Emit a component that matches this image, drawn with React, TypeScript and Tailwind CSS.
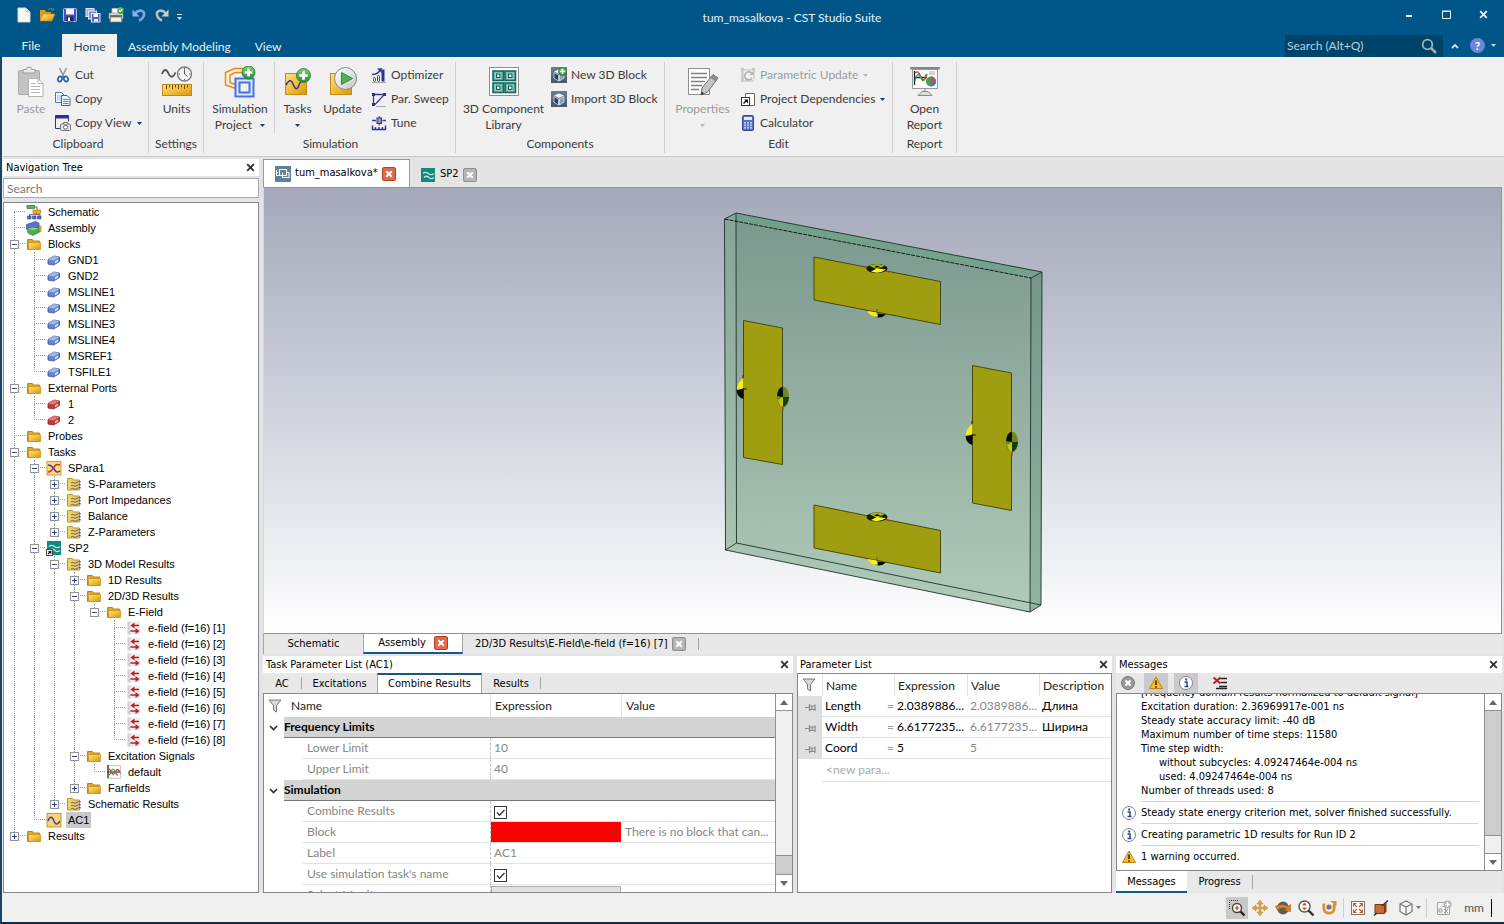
import React, { useState } from "react";
import type { ReactNode } from "react";

const segoe = "font-[Lato,'Open_Sans',sans-serif]";
const tahoma = "font-['DejaVu_Sans_Condensed','DejaVu_Sans',sans-serif]";
const micro = "font-['Liberation_Sans',Arial,sans-serif]";

type SvgProps = { size?: number; box?: string; className?: string; children: ReactNode };

function Svg({ size = 16, box, className = "", children }: SvgProps) {
  return (
    <svg
      width={size}
      height={size}
      viewBox={box ?? `0 0 ${size} ${size}`}
      fill="none"
      aria-hidden="true"
      className={`shrink-0 ${className}`}
    >
      {children}
    </svg>
  );
}

function Gradients() {
  return (
    <svg width="0" height="0" className="absolute" aria-hidden="true">
      <defs>
        <linearGradient id="gold" x1="0" y1="0" x2="1" y2="1">
          <stop offset="0" stopColor="#ffe08a" />
          <stop offset="0.5" stopColor="#f3bd3a" />
          <stop offset="1" stopColor="#d8960f" />
        </linearGradient>
        <linearGradient id="green" x1="0" y1="0" x2="0" y2="1">
          <stop offset="0" stopColor="#7ccf74" />
          <stop offset="1" stopColor="#2c8a35" />
        </linearGradient>
        <linearGradient id="steel" x1="0" y1="0" x2="0" y2="1">
          <stop offset="0" stopColor="#6b7f92" />
          <stop offset="1" stopColor="#43566a" />
        </linearGradient>
        <linearGradient id="glass" x1="0" y1="0" x2="1" y2="1">
          <stop offset="0" stopColor="#ffffff" />
          <stop offset="1" stopColor="#c4c8cc" />
        </linearGradient>
        <linearGradient id="plate" x1="0" y1="0" x2="0" y2="1">
          <stop offset="0" stopColor="#7b988e" />
          <stop offset="0.5" stopColor="#95b0a3" />
          <stop offset="1" stopColor="#b0cbb9" />
        </linearGradient>
      </defs>
    </svg>
  );
}

/* ---------- small glyphs ---------- */

const Close = ({ className = "" }: { className?: string }) => (
  <Svg size={9} className={className}>
    <path d="M1.2 1.2l6.6 6.6M7.8 1.2L1.2 7.8" stroke="currentColor" strokeWidth="1.9" />
  </Svg>
);

const Caret = ({ className = "text-[#333]" }: { className?: string }) => (
  <svg width="5" height="3" viewBox="0 0 5 3" aria-hidden="true" className={`shrink-0 ${className}`}>
    <path d="M0 0h5L2.5 3z" fill="currentColor" />
  </svg>
);

const TabClose = ({ active }: { active?: boolean }) => (
  <span
    className={`flex size-[14px] shrink-0 items-center justify-center rounded-[2px] border text-white ${
      active ? "border-[#b9401f] bg-[#e0694c]" : "border-[#8f8f8f] bg-[#b5b5b5]"
    }`}
  >
    <Svg size={8}>
      <path d="M1.2 1.2l5.6 5.6M6.8 1.2L1.2 6.8" stroke="currentColor" strokeWidth="2" />
    </Svg>
  </span>
);

const Plus = ({ cx, cy, r }: { cx: number; cy: number; r: number }) => (
  <g>
    <circle cx={cx} cy={cy} r={r} fill="url(#green)" stroke="#2a7a32" strokeWidth="0.8" />
    <path
      d={`M${cx - r * 0.6} ${cy}h${r * 1.2}M${cx} ${cy - r * 0.6}v${r * 1.2}`}
      stroke="#fff"
      strokeWidth={r * 0.38}
    />
  </g>
);

/* ---------- quick access icons ---------- */

const qat: [string, ReactNode][] = [
  ["New", <Svg key="n"><path d="M2 1h8l4 4v10H2z" fill="#fbfbf6" stroke="#cfd3d4" /><path d="M10 1v4h4" fill="#dfe3e4" stroke="#b9bfc2" strokeWidth="0.8" /></Svg>],
  ["Open", <Svg key="o"><path d="M1 14V3h5l1 2h5v3" fill="#d99a1c" /><path d="M1 14l3-7h12l-3 7z" fill="url(#gold)" stroke="#b87e12" strokeWidth="0.6" /><path d="M9 3c2-2 4-2 5 0m0 0l1-2m-1 2l-2-.4" stroke="#4f8f4a" strokeWidth="1.1" /></Svg>],
  ["Save", <Svg key="s"><rect x="1.5" y="1.5" width="13" height="13" rx="1" fill="#4a4fb0" stroke="#b9bdf0" /><rect x="4" y="2" width="8" height="5.5" fill="#f2f3ff" /><rect x="4.5" y="9.5" width="7" height="5" fill="#23276b" /><rect x="6" y="10.5" width="2" height="3.5" fill="#fff" /></Svg>],
  ["Save all", <Svg key="sa"><rect x="1" y="1.5" width="8" height="8" fill="#a5aee4" stroke="#e4e8ff" /><rect x="3.5" y="4" width="8" height="8" fill="#7f8ad4" stroke="#e4e8ff" /><rect x="6.5" y="6.5" width="8.500" height="8.500" fill="#5660bb" stroke="#dfe3ff" /><rect x="8.500" y="7" width="4.500" height="3" fill="#fff" /><rect x="9" y="12" width="4" height="2.500" fill="#e8eaff" /></Svg>],
  ["Print", <Svg key="p"><path d="M4 6V1.500h8V6" fill="#fff" stroke="#bbb" strokeWidth="0.8" /><rect x="1" y="6" width="14" height="6" rx="1" fill="#d8dadb" stroke="#8a8f92" strokeWidth="0.7" /><path d="M3 10h10l1 5H2z" fill="#f6f1d8" stroke="#777" strokeWidth="0.7" /><path d="M2 9h12" stroke="#444" strokeWidth="1.400" /><circle cx="12.500" cy="3.500" r="3.300" fill="url(#green)" /><path d="M11 3.500l1.200 1.200 2-2.400" stroke="#fff" strokeWidth="1.100" /></Svg>],
  ["Undo", <Svg key="u"><path d="M4 6.500C8 2 14 3 13 8c-.5 2.500-2.500 4.500-5 5.500" stroke="#7ea8ee" strokeWidth="2.600" /><path d="M1.500 2.500v7h7z" fill="#8cb2f4" /></Svg>],
  ["Redo", <Svg key="r"><path d="M12 6.500C8 2 2 3 3 8c.5 2.500 2.500 4.500 5 5.500" stroke="#bdbdbd" strokeWidth="2.600" /><path d="M14.500 2.500v7h-7z" fill="#cdcdcd" /></Svg>],
];

/* ---------- ribbon icons ---------- */

const Paste = () => (
  <Svg size={32}>
    <rect x="3.500" y="4.500" width="21" height="24" rx="1.500" fill="#c3c3c3" stroke="#a9a9a9" />
    <path d="M8 7V3.500h3.500a2.500 2.500 0 015 0H20V7z" fill="#e9e9e9" stroke="#9c9c9c" />
    <path d="M13.500 12.500H23l5 5v13H13.500z" fill="#fff" stroke="#b4b4b4" />
    <path d="M23 12.500v5h5M16 17.500h5M16 20.500h9M16 23.500h9M16 26.500h9" stroke="#b9b9b9" />
  </Svg>
);
const Cut = () => (
  <Svg>
    <path d="M4.500 1l4.500 9M11.500 1L7 10" stroke="#8b98a8" strokeWidth="1.600" />
    <ellipse cx="5" cy="12" rx="2" ry="2.600" stroke="#2f5ea8" strokeWidth="1.700" transform="rotate(25 5 12)" />
    <ellipse cx="11" cy="12" rx="2" ry="2.600" stroke="#2f5ea8" strokeWidth="1.700" transform="rotate(-25 11 12)" />
  </Svg>
);
const Copy = () => (
  <Svg>
    <path d="M.5 1.500h6L9 4v7.500H.5z" fill="#fff" stroke="#4b74bb" />
    <path d="M2 5h5M2 7h5M2 9h5" stroke="#8fb0e2" />
    <path d="M6.500 4.500h5.500l3 3v7H6.500z" fill="#eaf2ff" stroke="#3d65ad" />
    <path d="M8 8.500h5.500M8 10.500h5.500M8 12.500h5.500" stroke="#5f87cb" />
  </Svg>
);
const CopyView = () => (
  <Svg>
    <path d="M.5.500h13v6M.5.500v13h5" stroke="#2f3192" />
    <path d="M0 2h14" stroke="#2f3192" strokeWidth="3" />
    <rect x="5.500" y="9" width="10" height="6.500" rx="1" fill="#e1e1e1" stroke="#777" />
    <path d="M8.500 9V7.500h4V9" fill="#ddd" stroke="#777" />
    <circle cx="10.500" cy="12.200" r="2" fill="#fff" stroke="#666" />
  </Svg>
);
const Units = () => (
  <Svg size={32}>
    <path d="M1 8c2-5.500 4.500-5 6.500-.5S12 12 14.500 6.500" stroke="#555" strokeWidth="1.800" />
    <circle cx="23.500" cy="8" r="7" fill="#f4f4f4" stroke="#777" strokeWidth="1.300" />
    <path d="M23.500 3.500V8l3 2.500M23.500 1.800v1.500M29.500 8H28M23.500 14v-1M17.500 8H19" stroke="#555" />
    <rect x="1.500" y="18.500" width="29" height="11" fill="url(#gold)" stroke="#c1881b" />
    <path d="M5.500 19v4M8.500 19v2.500M11.500 19v4M14.500 19v2.500M17.500 19v4M20.500 19v2.500M23.500 19v4M26.500 19v2.500" stroke="#6b4a08" />
  </Svg>
);
const SimProject = () => (
  <Svg size={32}>
    <path d="M22 2.500H10.500L1.500 6.500v12.500l10 3.500v-4l-5.500-2V9l5.500-2.500H22z" stroke="#e08a1c" strokeWidth="1.500" fill="#fff0d8" />
    <rect x="11.500" y="12.500" width="18" height="18" fill="#dbe7ff" stroke="#4474e0" strokeWidth="2" />
    <rect x="15.500" y="16.500" width="10" height="10" fill="#f0f0f0" stroke="#4474e0" strokeWidth="2" />
    <Plus cx={24.500} cy={6.500} r={6.500} />
  </Svg>
);
const Tasks = () => (
  <Svg size={32}>
    <rect x="3.500" y="7.500" width="21" height="21" fill="url(#gold)" stroke="#c38b1a" />
    <path d="M4 19c3-5 5-6 7-1s4 7 6 1c1.500-4 3-5 7-5" stroke="#3b3390" strokeWidth="1.500" />
    <Plus cx={21.500} cy={9.500} r={7} />
  </Svg>
);
const Update = () => (
  <Svg size={32}>
    <rect x="3.500" y="7.500" width="21" height="21" fill="url(#gold)" stroke="#c38b1a" />
    <circle cx="18.500" cy="12.500" r="11" fill="url(#glass)" stroke="#858585" />
    <path d="M14.500 6.500l11 6-11 6z" fill="#4bb352" stroke="#2b8d35" />
  </Svg>
);
const Optimizer = () => (
  <Svg>
    <path d="M1 7.500c4 0 6-1 8-4" stroke="#3c3f94" strokeWidth="1.400" />
    <path d="M6 1.500L11 1l-.5 5z" fill="#3c3f94" />
    <rect x="2.500" y="10.500" width="2" height="4" rx="1" stroke="#3c3f94" />
    <rect x="6.500" y="8.500" width="2" height="6" rx="1" stroke="#3c3f94" />
    <path d="M12 2.500v12" stroke="#2e3192" strokeWidth="3" />
    <path d="M1 15.500h14" stroke="#aaa" />
  </Svg>
);
const Sweep = () => (
  <Svg>
    <path d="M2.500 15V3.500h11L4 13.500" stroke="#3a3c90" strokeWidth="1.300" />
    <path d="M1 2h3v3H1zM12 2h3v3h-3zM1 12h3v3H1z" fill="#2e3192" />
    <path d="M5 15.500h10" stroke="#aaa" />
  </Svg>
);
const Tune = () => (
  <Svg>
    <path d="M1 5.500h4M11.500 5.500H15" stroke="#3a3c90" strokeWidth="1.400" />
    <rect x="6" y="3" width="4.500" height="5.500" fill="#8e91d0" stroke="#2e3192" />
    <path d="M8.200 1v2M8.200 8.500v2" stroke="#2e3192" />
    <path d="M1.500 10.500v4h13v-4M4.500 12v2M8 12v2M11.500 12v2" stroke="#2e3192" strokeWidth="1.400" />
  </Svg>
);
const Library = () => (
  <Svg size={32}>
    <rect x="1.500" y="1.500" width="29" height="28" fill="#fff" stroke="#8e8e8e" />
    {[[5, 5], [17, 5], [5, 17], [17, 17]].map(([x, y]) => (
      <g key={`${x}-${y}`}>
        <rect x={x} y={y} width="10.500" height="9.500" fill="#74bdb2" stroke="#12685d" strokeWidth="1.600" />
        <rect x={x + 2.500} y={y + 2} width="5.500" height="5.500" fill="#eefaf8" />
        <rect x={x + 3.500} y={y + 3} width="3.500" height="3.500" fill="#fff" stroke="#0b5d52" strokeWidth="1.200" />
      </g>
    ))}
  </Svg>
);
const Block3d = ({ plus }: { plus?: boolean }) => (
  <Svg>
    <rect width="16" height="16" fill="url(#steel)" />
    <path d="M3 4.500l5-2 5 2-5 2.500z" fill="#f1f5f8" />
    <path d="M3 5.500L7.500 8v6L3 11z" fill="#2c3e50" stroke="#dbe3ea" strokeWidth="0.800" />
    <path d="M13 5.500L8.500 8v6l4.500-3z" fill="#8ba0b4" stroke="#dbe3ea" strokeWidth="0.800" />
    {plus && <Plus cx={11.500} cy={4.500} r={4} />}
  </Svg>
);
const Properties = () => (
  <Svg size={32}>
    <rect x="1.500" y="2.500" width="21" height="26" fill="#fff" stroke="#8f8f8f" />
    <path d="M4 7.500h16M4 11.500h16M4 15.500h14M4 19.500h11M4 23.500h8" stroke="#808080" strokeWidth="1.300" />
    <path d="M26 8.500l5 3.500-10.500 14-6.500 3 1-7z" fill="#c6c6c6" stroke="#6e6e6e" />
    <path d="M26 8.500l5 3.500-2.500 3.500-5-3.500z" fill="#8b8b8b" />
    <path d="M14 29l.6-3.500 2.600 2z" fill="#333" />
  </Svg>
);
const ParamUpdate = () => (
  <Svg>
    <path d="M3 2v12h11M2 14V3h12v9" stroke="#bdbdbd" />
    <path d="M1 1h3v3H1zM12 1h3v3h-3zM1 12h3v3H1z" fill="#c9c9c9" />
    <path d="M11.500 6a4 4 0 10.500 5" stroke="#b1b1b1" strokeWidth="1.600" />
    <path d="M13.500 4v4h-4z" fill="#b1b1b1" />
  </Svg>
);
const Dependencies = () => (
  <Svg>
    <path d="M5.500 6V2.500h9v12H9" fill="#fff" stroke="#666" />
    <rect x="1.500" y="6.500" width="8" height="8" fill="#fff" stroke="#333" />
    <path d="M3.500 12.500l3-3" stroke="#111" strokeWidth="1.500" />
    <path d="M4 8.500h4v4z" fill="#111" />
  </Svg>
);
const Calculator = () => (
  <Svg>
    <rect x="2.500" y=".5" width="11" height="15" rx="1" fill="#5a6fc0" stroke="#33479b" />
    <rect x="4" y="2" width="8" height="3" fill="#e3e9ff" />
    {[7, 9.500, 12].map((y) => [4, 7, 10].map((x) => <rect key={`${x}-${y}`} x={x} y={y} width="2" height="1.600" fill="#bcc7f2" />))}
  </Svg>
);
const Report = () => (
  <Svg size={32}>
    <rect x="1" y="1" width="30" height="2.500" rx="1" fill="#858585" />
    <rect x="3.500" y="3.500" width="25" height="19" fill="#fff" stroke="#999" />
    <path d="M5.500 5v14M5 11.500h13" stroke="#222" strokeWidth="1.300" />
    <path d="M6 7c3-3 4 0 6 4s4 4 6-3" stroke="#cf3340" strokeWidth="1.300" />
    <path d="M6 15c2-8 4-8 6-3s4 3 5-4" stroke="#3ca24a" strokeWidth="1.300" />
    <path d="M20 6h6M20 8h6" stroke="#aaa" />
    <circle cx="22" cy="15.500" r="5" fill="#4f9a58" />
    <path d="M22 15.500v-5a5 5 0 015 5z" fill="#d3464f" />
    <path d="M22 15.500h5a5 5 0 01-5 5z" fill="#5671c4" />
    <path d="M16 23v3M9 29.500h14l-4-4h-6z" stroke="#888" fill="#ddd" />
  </Svg>
);

/* ---------- tree icons ---------- */

const Folder = () => (
  <Svg>
    <path d="M1.500 3.500h5l1 1.500h6v8.500h-12z" fill="#dfa62c" stroke="#b8860f" />
    <path d="M2.500 6.500h12v7h-12z" fill="url(#gold)" stroke="#c9972a" strokeWidth="0.800" />
  </Svg>
);
const ResultFolder = () => (
  <Svg>
    <path d="M1.500 2.500h5l1 1.500h6v10h-12z" fill="#efcf62" stroke="#b8962f" />
    <path d="M5 7c2-2 3 1 5 0s3-2 5-1M5 10c2-2 3 1 5 0s3-2 5-1M5 13c2-2 3 1 5 0s3-2 5-1" stroke="#45478f" strokeWidth="0.900" />
  </Svg>
);
const TreeBlock = ({ red }: { red?: boolean }) => (
  <Svg>
    <path d="M2 7.500L8 4l5.500 1v4.500l-6 3.500L2 12z" fill={red ? "#c23a3a" : "#6b83cf"} stroke={red ? "#8f1f1f" : "#38509c"} strokeWidth="0.800" />
    <path d="M2 7.500L8 4l5.500 1-6 3.500z" fill={red ? "#e07a7a" : "#a4b6ea"} />
    <path d="M9 9.200l3-1.800v2l-3 1.800z" fill={red ? "#f4c8c8" : "#dfe6ff"} />
  </Svg>
);
const Schematic = () => (
  <Svg>
    <rect x="1" y="1.500" width="7.500" height="3" fill="#58b05a" stroke="#2d7d35" strokeWidth="0.700" />
    <rect x="7" y="6" width="7.500" height="3.500" fill="#f0a93a" stroke="#b87512" strokeWidth="0.700" />
    <path d="M8 3h3v3M10.500 9.500V11M3.500 12.500v-1.800h10.500v2" stroke="#555" strokeWidth="0.900" />
    <path d="M1.500 12h3.500v3H1.500zM6.500 12H10v3H6.500zM11.500 12H15v3h-3.500z" fill="#4f6cd0" stroke="#2e469d" strokeWidth="0.600" />
  </Svg>
);
const Assembly = () => (
  <Svg>
    <path d="M11 4.500l4.500 1.500v5.500L11 14z" fill="#e79a35" />
    <path d="M.5 4.500l9-3 3.500 1.500v4L5 10.500.5 9z" fill="#5875cc" stroke="#3a529f" strokeWidth="0.700" />
    <path d="M1 8.500l6-1 6 1v3.500L7 15.500l-5-2.500z" fill="#4fae56" stroke="#287f33" strokeWidth="0.700" />
    <path d="M1.500 8.500L7 10l6-1.500L7 7.500z" fill="#8bd48c" />
  </Svg>
);
const SPara = () => (
  <Svg>
    <rect x="1" y="1.500" width="14" height="13.500" fill="#fbd98a" stroke="#df9320" />
    <path d="M2 5c3 0 4 1 6 4s3 4 6 2" stroke="#4a3fa0" strokeWidth="1.600" />
    <path d="M2 12c3 0 4-2 6-5s3-3 6-2" stroke="#cc2d2d" strokeWidth="1.600" />
  </Svg>
);
const WaveTile = ({ link }: { link?: boolean }) => (
  <Svg>
    <rect x="1" y="1" width="14" height="14" fill="#108a7c" />
    <path d="M3 6.500c2-2 3.500-1.500 5.500 0s3.500 1.500 5.500 0M4 10.500c2-2 3.500-1.500 5 0s3 1.500 5 0" stroke="#bfe6e0" strokeWidth="1.200" />
    {link && (
      <g>
        <rect x=".5" y="9.500" width="6" height="6" fill="#fff" stroke="#444" />
        <path d="M2 14l2.500-2.500M2.500 11.500h2.300v2.300" stroke="#111" strokeWidth="1.100" />
      </g>
    )}
  </Svg>
);
const AcTask = () => (
  <Svg>
    <rect x="1" y="1.500" width="14" height="13.500" fill="#f9d27c" stroke="#d0951e" />
    <path d="M2 9c2-5 4-5 6 0s4 3 6 0" stroke="#4b3f9a" strokeWidth="1.500" />
  </Svg>
);
const Field = () => (
  <Svg>
    <path d="M1.500 1.500h12.500v13H1.500z" fill="#ececec" />
    <path d="M1.500 1.500h3v13h-3z" fill="#d3d3d3" />
    <path d="M13 5.500H7M4.500 11h6" stroke="#b5202a" strokeWidth="1.600" />
    <path d="M4.500 5.500l4-3v6zM13.500 11l-4-3v6z" fill="#b5202a" />
  </Svg>
);
const Signal = () => (
  <Svg>
    <rect x="1.500" y="1.500" width="13" height="13" fill="#f6fbf4" stroke="#c9c9c9" />
    <path d="M2 1v13M2 8h12" stroke="#222" strokeWidth="1.200" />
    <path d="M2.500 5c2-1 3 6 5 5s3-6 5-4 1.500 3 2 3" stroke="#cb2e3a" strokeWidth="1.200" />
    <path d="M3 11c2 0 2-6 4-6s3 7 5 6" stroke="#3ba24b" strokeWidth="1.200" />
  </Svg>
);

/* ---------- navigation tree ---------- */

type Node = { label: string; icon: ReactNode; kids?: Node[]; closed?: boolean; selected?: boolean };
const leaf = (label: string, icon: ReactNode): Node => ({ label, icon });

const tree: Node[] = [
  leaf("Schematic", <Schematic />),
  leaf("Assembly", <Assembly />),
  {
    label: "Blocks",
    icon: <Folder />,
    kids: ["GND1", "GND2", "MSLINE1", "MSLINE2", "MSLINE3", "MSLINE4", "MSREF1", "TSFILE1"].map((n) => leaf(n, <TreeBlock />)),
  },
  { label: "External Ports", icon: <Folder />, kids: ["1", "2"].map((n) => leaf(n, <TreeBlock red />)) },
  leaf("Probes", <Folder />),
  {
    label: "Tasks",
    icon: <Folder />,
    kids: [
      {
        label: "SPara1",
        icon: <SPara />,
        kids: ["S-Parameters", "Port Impedances", "Balance", "Z-Parameters"].map((label) => ({ label, icon: <ResultFolder />, closed: true })),
      },
      {
        label: "SP2",
        icon: <WaveTile link />,
        kids: [
          {
            label: "3D Model Results",
            icon: <ResultFolder />,
            kids: [
              { label: "1D Results", icon: <Folder />, closed: true },
              {
                label: "2D/3D Results",
                icon: <Folder />,
                kids: [
                  {
                    label: "E-Field",
                    icon: <Folder />,
                    kids: [1, 2, 3, 4, 5, 6, 7, 8].map((n) => leaf(`e-field (f=16) [${n}]`, <Field />)),
                  },
                ],
              },
              { label: "Excitation Signals", icon: <Folder />, kids: [leaf("default", <Signal />)] },
              { label: "Farfields", icon: <Folder />, closed: true },
            ],
          },
          { label: "Schematic Results", icon: <ResultFolder />, closed: true },
        ],
      },
      { label: "AC1", icon: <AcTask />, selected: true },
    ],
  },
  { label: "Results", icon: <Folder />, closed: true },
];

const dots = "border-dotted border-[#9a9a9a]";

function Expander({ closed }: { closed?: boolean }) {
  return (
    <span className="absolute left-[5px] top-1 flex size-[9px] items-center justify-center border border-[#919191] bg-white">
      <Svg size={5}>
        <path d={closed ? "M0 2.500h5M2.500 0v5" : "M0 2.500h5"} stroke="#2c3f8f" />
      </Svg>
    </span>
  );
}

function TreeRows({ nodes, lines }: { nodes: Node[]; lines: boolean[] }) {
  return (
    <ul>
      {nodes.map((node, i) => {
        const last = i === nodes.length - 1;
        const first = lines.length === 0 && i === 0;
        return (
          <li key={node.label}>
            <div className="flex h-4 items-center whitespace-nowrap">
              {lines.map((on, k) => (
                <span key={k} className="flex h-4 w-5 shrink-0 pl-[9px]">
                  {on && <span className={`border-l ${dots}`} />}
                </span>
              ))}
              <span className="relative flex h-4 w-5 shrink-0 flex-col pl-[9px]">
                <span className={`h-2 border-b ${first ? "" : "border-l"} ${dots}`} />
                <span className={`h-2 ${last ? "" : "border-l"} ${dots}`} />
                {(node.kids || node.closed) && <Expander closed={node.closed} />}
              </span>
              <span className="mr-[3px] flex w-5 shrink-0 pl-px">{node.icon}</span>
              <span className={node.selected ? "-ml-0.5 bg-[#c8c8c8] px-0.5" : ""}>{node.label}</span>
            </div>
            {node.kids && <TreeRows nodes={node.kids} lines={[...lines, !last]} />}
          </li>
        );
      })}
    </ul>
  );
}

function PanelTitle({ children }: { children: ReactNode }) {
  return (
    <header className="flex h-[17px] shrink-0 items-center justify-between bg-white pl-[3px] pr-1 text-black">
      <h2>{children}</h2>
      <button type="button" aria-label="Close panel" className="text-[#333]">
        <Close />
      </button>
    </header>
  );
}

function NavPanel() {
  return (
    <aside className={`flex w-[256px] shrink-0 flex-col text-[11px] leading-4 ${tahoma}`}>
      <PanelTitle>Navigation Tree</PanelTitle>
      <input
        type="search"
        aria-label="Search"
        placeholder="Search"
        className={`mt-0.5 h-5 border border-[#ababab] bg-white px-[3px] text-xs placeholder:text-[#777] ${segoe}`}
      />
      <nav className={`mt-1 min-h-0 flex-1 overflow-hidden border border-[#828790] bg-white pl-px pt-px text-black ${micro}`}>
        <TreeRows nodes={tree} lines={[]} />
      </nav>
    </aside>
  );
}

/* ---------- ribbon ---------- */

function Group({ title, width, children }: { title: string; width: string; children: ReactNode }) {
  return (
    <section className={`flex shrink-0 flex-col border-r border-[#d0d0d0] ${width}`}>
      <div className="flex h-[74px] items-start">{children}</div>
      <h3 className="text-center leading-4">{title}</h3>
    </section>
  );
}

type BigProps = { icon: ReactNode; label: string; second?: string; caret?: boolean; disabled?: boolean; width: string };

function Big({ icon, label, second, caret, disabled, width }: BigProps) {
  return (
    <button type="button" disabled={disabled} className={`flex shrink-0 flex-col items-center pt-1 leading-4 disabled:text-[#9b9b9b] ${width}`}>
      {icon}
      <span className="mt-[3px] whitespace-nowrap">{label}</span>
      <span className="flex h-4 items-center gap-2 whitespace-nowrap">
        {second}
        {caret && <Caret className={disabled ? "text-[#b5b5b5]" : "text-[#1f3a5a]"} />}
      </span>
    </button>
  );
}

function Small({ icon, label, caret, disabled }: { icon: ReactNode; label: string; caret?: boolean; disabled?: boolean }) {
  return (
    <button type="button" disabled={disabled} className="flex h-6 items-center whitespace-nowrap disabled:text-[#9b9b9b]">
      {icon}
      <span className="ml-1">{label}</span>
      {caret && <Caret className={disabled ? "ml-[5px] text-[#b5b5b5]" : "ml-[5px] text-[#1f3a5a]"} />}
    </button>
  );
}

function Ribbon() {
  return (
    <div className={`flex h-[100px] shrink-0 overflow-hidden border-b border-[#c9c9c9] bg-[#f0f0f0] pb-[3px] pt-[5px] text-xs text-[#3b3b3b] ${segoe}`}>
      <Group title="Clipboard" width="w-[146px] pl-[5px]">
        <Big icon={<Paste />} label="Paste" disabled width="w-[46px]" />
        <div className="ml-px flex flex-col pt-px">
          <Small icon={<Cut />} label="Cut" />
          <Small icon={<Copy />} label="Copy" />
          <Small icon={<CopyView />} label="Copy View" caret />
        </div>
      </Group>
      <Group title="Settings" width="w-[55px]">
        <Big icon={<Units />} label="Units" width="w-[55px]" />
      </Group>
      <Group title="Simulation" width="w-[252px] pl-0.5">
        <Big icon={<SimProject />} label="Simulation" second="Project" caret width="w-[69px] border-r border-[#d0d0d0]" />
        <Big icon={<Tasks />} label="Tasks" caret width="w-[45px]" />
        <Big icon={<Update />} label="Update" width="w-[45px]" />
        <div className="ml-1.5 flex flex-col pt-px">
          <Small icon={<Optimizer />} label="Optimizer" />
          <Small icon={<Sweep />} label="Par. Sweep" />
          <Small icon={<Tune />} label="Tune" />
        </div>
      </Group>
      <Group title="Components" width="w-[209px]">
        <Big icon={<Library />} label="3D Component" second="Library" width="w-[95px]" />
        <div className="flex flex-col pt-px">
          <Small icon={<Block3d plus />} label="New 3D Block" />
          <Small icon={<Block3d />} label="Import 3D Block" />
        </div>
      </Group>
      <Group title="Edit" width="w-[228px]">
        <Big icon={<Properties />} label="Properties" caret disabled width="w-[75px]" />
        <div className="flex flex-col pt-px">
          <Small icon={<ParamUpdate />} label="Parametric Update" caret disabled />
          <Small icon={<Dependencies />} label="Project Dependencies" caret />
          <Small icon={<Calculator />} label="Calculator" />
        </div>
      </Group>
      <Group title="Report" width="w-[64px]">
        <Big icon={<Report />} label="Open" second="Report" width="w-[63px]" />
      </Group>
    </div>
  );
}

function TitleBar() {
  return (
    <header className={`shrink-0 bg-[#005689] text-xs text-[#e8f0f5] ${segoe}`}>
      <div className="grid h-[34px] grid-cols-[1fr_auto_1fr] items-center pr-3">
        <div className="flex items-center gap-[7px] pb-1 pl-4">
          {qat.map(([name, icon]) => (
            <button key={name} type="button" aria-label={name}>
              {icon}
            </button>
          ))}
          <button type="button" aria-label="Customize toolbar" className="mt-1 flex flex-col items-center gap-0.5">
            <span className="h-px w-[5px] bg-[#cfe0ea]" />
            <Caret className="text-[#cfe0ea]" />
          </button>
        </div>
        <h1 className="pl-[92px] pt-0.5">tum_masalkova - CST Studio Suite</h1>
        <div className="flex items-center justify-end gap-7 pb-1.5 pr-1">
          <button type="button" aria-label="Minimize" className="pt-1.5">
            <Svg size={9}><path d="M1 3h6" stroke="#e8f0f5" strokeWidth="2" /></Svg>
          </button>
          <button type="button" aria-label="Maximize">
            <Svg size={9}><path d="M.5 1.500h8v7h-8zM0 1h9" stroke="#e8f0f5" /></Svg>
          </button>
          <button type="button" aria-label="Close window">
            <Close />
          </button>
        </div>
      </div>
      <div className="flex h-[23px] items-center justify-between">
        <div className="flex self-stretch leading-6">
          <button type="button" className="w-[62px] pb-0.5">File</button>
          <button type="button" className="w-[55px] bg-[#f0f0f0] pt-px text-[#1e4a6d]">Home</button>
          <button type="button" className="pl-[11px] pr-3 pt-px">Assembly Modeling</button>
          <button type="button" className="px-3 pt-px">View</button>
        </div>
        <div className="flex items-center self-stretch">
          <label className="flex h-[22px] w-[158px] items-center self-end bg-[#004369] px-0.5">
            <input aria-label="Search (Alt+Q)" placeholder="Search (Alt+Q)" className="min-w-0 flex-1 bg-transparent placeholder:text-[#b9cfdd]" />
            <Svg className="mr-1">
              <circle cx="6.500" cy="6.500" r="4.800" stroke="#9fb0bb" strokeWidth="1.800" />
              <path d="M10 10l5 5" stroke="#9fb0bb" strokeWidth="2.500" />
            </Svg>
          </label>
          <button type="button" aria-label="Collapse ribbon" className="ml-2">
            <Svg size={8}><path d="M1 6l3-3 3 3" stroke="#d3e2ec" strokeWidth="1.800" /></Svg>
          </button>
          <button type="button" aria-label="Help" className="ml-[11px] flex size-[15px] items-center justify-center rounded-full bg-[#6b87d8] text-xs font-bold leading-none text-white">
            ?
          </button>
          <span className="ml-[6px] mr-2"><Caret className="text-[#c5d8e5]" /></span>
        </div>
      </div>
    </header>
  );
}

/* ---------- 3D viewport ---------- */

const patches = [
  "104,56 230.500,80.500 230.500,123.500 104,99",
  "33.500,119.500 72.500,127 72.500,263.500 33.500,256.500",
  "262.500,164.500 301.500,172 301.500,309.500 262.500,302",
  "104,304 230.500,329.500 230.500,372 104,347",
];

const TopPort = ({ x, y }: { x: number; y: number }) => (
  <g>
    <ellipse cx={x} cy={y} rx="10.500" ry="4.500" fill="#161a08" />
    <path d={`M${x - 8} ${y - 3}q8-3 16 0l-8 4z`} fill="#a8b400" />
    <path d={`M${x - 6} ${y + 3}l6-3 9 1q-7 5-15 2z`} fill="#ffff1e" />
    <path d={`M${x - 3} ${y - 1}l3-2 4 2z`} fill="#101505" />
    <path d={`M${x + 9} ${y + 2}l3 2`} stroke="#d03020" />
  </g>
);
const BottomPort = ({ x, y }: { x: number; y: number }) => (
  <g>
    <path d={`M${x - 3} ${y}l12 1.500q-4 4-10 2.500z`} fill="#080a04" />
    <path d={`M${x - 10} ${y - 2}l10 1.500 1 4q-7 1-11-5.500z`} fill="#f6ee18" />
    <path d={`M${x} ${y}v-4M${x - 12} ${y - 3}l3 1`} stroke="#7a4a18" />
  </g>
);
const LeftPort = ({ x, y }: { x: number; y: number }) => (
  <g>
    <path d={`M${x} ${y - 11}q-7 5-6.500 12l6.500-2z`} fill="#f6ee18" />
    <path d={`M${x - 7} ${y + 1}l7-1v10q-6-1-7-9z`} fill="#080a04" />
    <path d={`M${x - 6} ${y + 2}l6-2h3`} stroke="#080a04" />
    <path d={`M${x - 1} ${y - 14}v3`} stroke="#d03020" />
  </g>
);
const RightPort = ({ x, y }: { x: number; y: number }) => (
  <g>
    <ellipse cx={x} cy={y} rx="6" ry="10.500" fill="#6f8a1a" />
    <path d={`M${x} ${y}l-6-1q1-9 6-9z`} fill="#0a0d05" />
    <path d={`M${x} ${y}l6 0q-1 8-6 10z`} fill="#123c14" />
    <path d={`M${x} ${y}l-5 3q2 7 5 7z`} fill="#c3c70c" />
    <path d={`M${x} ${y + 10}v4`} stroke="#d03020" />
  </g>
);

function Viewport() {
  return (
    <main className="flex min-h-0 flex-1 items-center justify-center overflow-hidden border border-[#8f939c] border-l-[#d7d7d7] bg-linear-to-b from-[#a4a8b9] via-[#d0d3dd] to-white">
      <svg viewBox="0 0 346 420" fill="none" className="h-[420px] w-[346px]" role="img" aria-label="Antenna assembly">
        <path d="M14.500 18L26 12 332 71 331 404 320 411 15.500 349z" fill="url(#plate)" />
        <path d="M14.500 18L26 12 332 71 321 77z" fill="#6da587" fillOpacity="0.600" />
        <path d="M321 77L332 71 331 404 320 411z" fill="#5f8775" fillOpacity="0.350" />
        <path d="M14.500 18L26 12 26.500 342 15.500 349z" fill="#a9c9b8" fillOpacity="0.250" />
        <g stroke="#1c3327" strokeWidth="0.900">
          <path d="M14.500 18L26 12 332 71 331 404 320 411 15.500 349z" />
          <path d="M26 12L26.500 342 15.500 349M26.500 342L331 404M321 77L332 71M321 77L320 411" />
        </g>
        <path d="M14.500 18L321 77" stroke="#101c15" strokeDasharray="4 1" />
        {patches.map((p) => (
          <polygon key={p} points={p} fill="#9e9e10" stroke="#3c3f08" strokeWidth="0.900" />
        ))}
        <TopPort x={167} y={67.500} />
        <BottomPort x={167} y={112} />
        <TopPort x={167} y={316} />
        <BottomPort x={167} y={360} />
        <LeftPort x={33.500} y={188} />
        <RightPort x={73} y={196} />
        <LeftPort x={262.500} y={234} />
        <RightPort x={302} y={241} />
      </svg>
    </main>
  );
}

function DocTabs() {
  return (
    <div className={`flex h-[28px] shrink-0 items-end text-[11px] text-black ${tahoma}`}>
      <button type="button" className="flex h-[28px] w-[147px] items-center gap-1 whitespace-nowrap border border-b-0 border-[#9a9a9a] bg-white pl-[11px]">
        <Svg>
          <rect width="16" height="16" fill="#5f8197" />
          <path d="M4.500 3.500h7v6h-7zM1.500 4v5.500h3M11.500 6.500H14v5H7.500v-5M1 6.500h2" stroke="#fff" strokeWidth="1.100" />
        </Svg>
        tum_masalkova*
        <TabClose active />
      </button>
      <button type="button" className="flex h-[25px] items-center gap-1 pl-[10px]">
        <WaveTile />
        SP2
        <TabClose />
      </button>
    </div>
  );
}

function ViewTabs() {
  return (
    <div className={`flex h-[20px] shrink-0 items-stretch whitespace-nowrap bg-[#e8e8e8] text-[11px] text-black ${tahoma}`}>
      <button type="button" className="w-[100px] border-l border-[#a5a5a5] text-center">Schematic</button>
      <button type="button" className="flex w-[100px] items-center justify-center gap-2 border-x border-b-2 border-x-[#a5a5a5] border-b-[#1b5680] bg-white">
        Assembly
        <TabClose active />
      </button>
      <button type="button" className="flex items-center gap-1 pl-3">
        2D/3D Results\E-Field\e-field (f=16) [7]
        <TabClose />
      </button>
      <span className="my-1 ml-3 border-l border-[#a5a5a5]" />
    </div>
  );
}

/* ---------- bottom panels ---------- */

function Arrow({ down, edge }: { down?: boolean; edge: string }) {
  return (
    <span className={`flex h-[17px] shrink-0 items-center justify-center bg-white ${edge}`}>
      <svg width="8" height="5" viewBox="0 0 8 5" aria-hidden="true">
        <path d={down ? "M0 0h8L4 5z" : "M0 5h8L4 0z"} fill="#666" />
      </svg>
    </span>
  );
}

const Funnel = () => (
  <Svg size={14}>
    <path d="M1 1h12L8.500 6.500V13L5.500 11V6.500z" fill="#d8d8d8" stroke="#777" />
  </Svg>
);

const Chevron = ({ color = "#333" }: { color?: string }) => (
  <Svg size={9}>
    <path d="M1 3l3.500 3.500L8 3" stroke={color} strokeWidth="1.700" />
  </Svg>
);

function Tick({ label }: { label: string }) {
  const [on, setOn] = useState(true);
  return (
    <label className="relative ml-[3px] mt-0.5 flex size-[13px]">
      <input type="checkbox" aria-label={label} checked={on} onChange={(e) => setOn(e.target.checked)} className="size-[13px] appearance-none border border-[#333] bg-white" />
      {on && (
        <Svg size={13} className="pointer-events-none absolute inset-0">
          <path d="M3 6.500l2.500 2.700L10.500 4" stroke="#333" strokeWidth="1.300" />
        </Svg>
      )}
    </label>
  );
}

function SectionRow({ title }: { title: string }) {
  return (
    <tr className="h-[21px]">
      <td className="text-center align-middle"><button type="button" aria-label={`Collapse ${title}`} className="flex pl-[5px]"><Chevron /></button></td>
      <th colSpan={3} className="border-b border-[#777] bg-[#d3d3d3] text-left font-bold text-black">{title}</th>
    </tr>
  );
}

function Row({ name, children, value }: { name: string; children?: ReactNode; value?: string }) {
  return (
    <tr className="h-[21px] text-[#868686]">
      <td />
      <td className="pl-[19px]"><div className="h-[21px] truncate border-b border-[#e2e2e2] pl-1 leading-5">{name}</div></td>
      <td className="border-b border-l border-dashed border-b-[#e2e2e2] border-l-[#c4c4c4] [border-bottom-style:solid]">{children}</td>
      <td className="truncate border-b border-[#e2e2e2] pl-1">{value}</td>
    </tr>
  );
}

function TaskPanel() {
  return (
    <section className={`flex min-h-0 min-w-0 flex-col text-[11px] leading-4 ${tahoma}`}>
      <PanelTitle>Task Parameter List (AC1)</PanelTitle>
      <div className="flex h-[20px] shrink-0 items-stretch bg-[#e8e8e8] text-black">
        <button type="button" className="w-[38px] pt-0.5 text-center">AC</button>
        <span className="my-1 border-l border-[#a5a5a5]" />
        <button type="button" className="w-[75px] pt-0.5 text-center">Excitations</button>
        <button type="button" className="w-[105px] border-x border-t-2 border-x-[#a5a5a5] border-t-[#1b5680] bg-white text-center">Combine Results</button>
        <button type="button" className="w-[58px] pt-0.5 text-center">Results</button>
        <span className="my-1 border-l border-[#a5a5a5]" />
      </div>
      <div className={`flex min-h-0 flex-1 border border-[#828790] bg-white text-xs ${segoe}`}>
        <div className="min-w-0 flex-1 overflow-hidden">
          <table className="w-full table-fixed border-separate border-spacing-0">
            <colgroup>
              <col className="w-[20px]" />
              <col className="w-[206px]" />
              <col className="w-[131px]" />
              <col />
            </colgroup>
            <thead>
              <tr className="h-[23px] text-left text-[#222]">
                <th className="pl-1 font-normal"><Funnel /></th>
                <th className="pl-[7px] pt-px font-normal">Name</th>
                <th className="border-l border-[#e2e2e2] pl-1 pt-px font-normal">Expression</th>
                <th className="border-l border-[#e2e2e2] pl-1 pt-px font-normal">Value</th>
              </tr>
            </thead>
            <tbody>
              <SectionRow title="Frequency Limits" />
              <Row name="Lower Limit"><span className="pl-[3px]">10</span></Row>
              <Row name="Upper Limit"><span className="pl-[3px]">40</span></Row>
              <SectionRow title="Simulation" />
              <Row name="Combine Results"><Tick label="Combine Results" /></Row>
              <Row name="Block" value="There is no block that can...">
                <div className="flex h-5 items-center bg-[#ff0000] pr-[3px]">
                  <select aria-label="Block" className="h-5 min-w-0 flex-1 appearance-none bg-[#ff0000]"><option value="" /></select>
                  <Chevron color="#b32020" />
                </div>
              </Row>
              <Row name="Label"><span className="pl-[3px]">AC1</span></Row>
              <Row name="Use simulation task's name"><Tick label="Use simulation task's name" /></Row>
              <Row name="Select Monitors"><button type="button" aria-label="Select Monitors" className="mt-px block h-[19px] w-full border border-[#adadad] bg-[#e1e1e1]" /></Row>
            </tbody>
          </table>
        </div>
        <div className="flex w-[17px] shrink-0 flex-col border-l border-[#8f8f8f] bg-[#f0f0f0]">
          <Arrow edge="border-b border-[#8f8f8f]" />
          <span className="flex-1" />
          <span className="h-5 border-y border-[#8f8f8f] bg-[#cdcdcd]" />
          <Arrow down edge="" />
        </div>
      </div>
    </section>
  );
}

const Pin = () => (
  <Svg size={12}>
    <path d="M0 6.500h4.500M4.500 3v7M4.500 5h5M4.500 8.500h5M10 3.500v6.500M7 5v3" stroke="#8a8a8a" strokeWidth="1.200" />
  </Svg>
);

const params = [
  ["Length", "2.0389886...", "2.0389886...", "Длина"],
  ["Width", "6.6177235...", "6.6177235...", "Ширина"],
  ["Coord", "5", "5", ""],
];

function ParamPanel() {
  return (
    <section className={`flex min-h-0 min-w-0 flex-col text-[11px] leading-4 ${tahoma}`}>
      <PanelTitle>Parameter List</PanelTitle>
      <div className={`min-h-0 flex-1 overflow-hidden border border-[#828790] bg-white text-xs ${segoe}`}>
        <table className="w-full table-fixed border-separate border-spacing-0 whitespace-nowrap text-black">
          <colgroup>
            <col className="w-[24px]" />
            <col className="w-[72px]" />
            <col className="w-[73px]" />
            <col className="w-[72px]" />
            <col />
          </colgroup>
          <thead>
            <tr className="h-[22px] text-left text-[#222]">
              <th className="pl-1 font-normal"><Funnel /></th>
              {["Name", "Expression", "Value", "Description"].map((h) => (
                <th key={h} className="border-l border-[#e2e2e2] pl-[3px] pt-0.5 font-normal">{h}</th>
              ))}
            </tr>
          </thead>
          <tbody>
            {params.map(([name, expr, value, desc]) => (
              <tr key={name} className="h-[21px]">
                <td className="bg-[#dfdfdf] pl-[7px]"><Pin /></td>
                <td className="border-b border-[#e2e2e2] pl-[3px]">
                  <div className="flex justify-between"><span>{name}</span><span className="text-[#999]">=</span></div>
                </td>
                <td className="border-b border-[#e2e2e2] pl-[3px]">{expr}</td>
                <td className="border-b border-[#e2e2e2] pl-[3px] text-[#868686]">{value}</td>
                <td className="border-b border-[#e2e2e2] pl-[3px]">{desc}</td>
              </tr>
            ))}
            <tr className="h-[23px] text-[#a9a9a9]">
              <td />
              <td colSpan={4} className="border-b border-[#e2e2e2] pl-1">&lt;new para...</td>
            </tr>
          </tbody>
        </table>
      </div>
    </section>
  );
}

const Info = () => (
  <Svg>
    <circle cx="8" cy="8" r="6.500" fill="#fff" stroke="#7a8796" />
    <path d="M6.500 7H9v4.500M6.500 11.500H10.500" stroke="#2e3f9c" strokeWidth="1.500" />
    <rect x="7.200" y="3.500" width="2" height="2" fill="#2e3f9c" />
  </Svg>
);
const Warn = () => (
  <Svg>
    <path d="M8 2l6.500 11.500h-13z" fill="#f4bd28" stroke="#bb8413" strokeLinejoin="round" />
    <path d="M8 5.500v4.500M8 11.300v1.500" stroke="#3a2a05" strokeWidth="1.600" />
  </Svg>
);

const log = [
  "[Frequency domain results normalized to default signal]",
  "Excitation duration: 2.36969917e-001 ns",
  "Steady state accuracy limit: -40 dB",
  "Maximum number of time steps: 11580",
  "Time step width:",
];

function Message({ icon, children, last }: { icon: ReactNode; children: ReactNode; last?: boolean }) {
  return (
    <li className="flex h-[22px] shrink-0 items-stretch gap-1">
      <span className="flex w-4 items-center">{icon}</span>
      <span className={`flex flex-1 items-center whitespace-nowrap border-b ${last ? "border-transparent" : "border-[#d4d4d4]"}`}>{children}</span>
    </li>
  );
}

function MessagesPanel() {
  return (
    <section className={`flex min-h-0 min-w-0 flex-col text-[11px] leading-4 text-black ${tahoma}`}>
      <PanelTitle>Messages</PanelTitle>
      <div className="flex h-5 shrink-0 items-stretch bg-[#e8e8e8]">
        <button type="button" aria-label="Errors" className="flex w-6 items-center justify-center">
          <Svg><circle cx="8" cy="8" r="6.500" fill="#999" stroke="#777" /><path d="M5.500 5.500l5 5M10.500 5.500l-5 5" stroke="#fff" strokeWidth="2" /></Svg>
        </button>
        <button type="button" aria-label="Warnings" className="ml-1 flex w-6 items-center justify-center bg-[#cbcbcb]"><Warn /></button>
        <button type="button" aria-label="Information" className="ml-1.5 flex w-6 items-center justify-center bg-[#cbcbcb]"><Info /></button>
        <button type="button" aria-label="Clear messages" className="ml-2.5 flex w-6 items-center justify-center">
          <Svg><path d="M7 3.500h8M9 7.500h6M7 11.500h8M4 13.500h11" stroke="#222" strokeWidth="1.300" /><path d="M1.500 2.500l7 6M8.500 2.500l-7 6" stroke="#b3202b" strokeWidth="2" /></Svg>
        </button>
      </div>
      <div className="flex min-h-0 flex-1 border border-[#828790] bg-white">
        <ul className="flex min-w-0 flex-1 flex-col justify-end overflow-hidden pb-0.5 pl-1 pr-[5px]">
          <li className="ml-5 shrink-0 whitespace-nowrap border-b border-[#d4d4d4] pb-[3px] leading-[14px]">
            {log.map((line) => <p key={line}>{line}</p>)}
            <p className="pl-[18px]">without subcycles: 4.09247464e-004 ns</p>
            <p className="pl-[18px]">used: 4.09247464e-004 ns</p>
            <p>Number of threads used: 8</p>
          </li>
          <Message icon={<Info />}>Steady state energy criterion met, solver finished successfully.</Message>
          <Message icon={<Info />}>Creating parametric 1D results for Run ID 2</Message>
          <Message icon={<Warn />} last>1 warning occurred.</Message>
        </ul>
        <div className="flex w-[17px] shrink-0 flex-col border-l border-[#8f8f8f] bg-[#cdcdcd]">
          <Arrow edge="border-b border-[#8f8f8f]" />
          <span className="flex-1" />
          <span className="h-[18px] border-t border-[#8f8f8f] bg-[#f0f0f0]" />
          <Arrow down edge="border-t border-[#8f8f8f]" />
        </div>
      </div>
      <div className="flex h-[22px] shrink-0 items-stretch bg-[#e8e8e8]">
        <button type="button" className="w-[71px] border-b-2 border-[#1b5680] bg-white pt-0.5 text-center">Messages</button>
        <button type="button" className="w-[65px] text-center">Progress</button>
        <span className="my-1 border-l border-[#a5a5a5]" />
      </div>
    </section>
  );
}

/* ---------- status bar ---------- */

const orange = "#d9822b";
const viewTools: [string, ReactNode][] = [
  ["Pan", <Svg key="p"><path d="M8 2v12M2 8h12" stroke="#d9a045" strokeWidth="2.400" /><path d="M8 0l3 4H5zM8 16l3-4H5zM0 8l4-3v6zM16 8l-4-3v6z" fill="#e0a94e" stroke="#a9772a" strokeWidth="0.500" /></Svg>],
  ["Rotate", <Svg key="r"><ellipse cx="8" cy="8" rx="6" ry="6.500" fill="#5b5b5b" /><path d="M.5 6.500c4-2.500 9-2.500 13 0l2-2v7l-6-1 2-2c-3-1-6-1-9 1.500z" fill={orange} stroke="#9a5410" strokeWidth="0.600" /></Svg>],
  ["Zoom", <Svg key="z"><circle cx="6.500" cy="6.500" r="5.500" fill="#fff" stroke="#555" strokeWidth="1.400" /><path d="M10.500 10.500l5 5" stroke="#333" strokeWidth="2.400" /><path d="M6.500 2.500l2.500 3H4zM6.500 10.500l2.500-3H4z" fill="#c4601a" /></Svg>],
  ["Spin", <Svg key="s"><path d="M2.800 3.500v4.500a5.200 5.200 0 0010.400 0V4" stroke="#e08f2c" strokeWidth="2.800" /><path d="M9 1h6.500v5z" fill="#e08f2c" /><circle cx="8" cy="7" r="2.600" fill="#777" /></Svg>],
];

function StatusBar() {
  const tool = "flex h-[22px] items-center justify-center";
  return (
    <footer className={`flex h-[29px] shrink-0 items-center justify-end bg-[#f0f0f0] pr-3 text-xs text-[#555] ${segoe}`}>
      <button type="button" aria-label="Zoom to area" className={`${tool} w-[22px] bg-[#c9c9c9]`}>
        <Svg>
          <path d="M.5 9V.5H9" stroke="#333" strokeDasharray="1 1" />
          <circle cx="8" cy="8" r="4.500" fill="#fff" stroke="#444" strokeWidth="1.400" />
          <path d="M11.500 11.500l4 4" stroke="#222" strokeWidth="2.400" />
          <path d="M5.800 8h4.400M8 5.800v4.400" stroke="#a3461c" strokeWidth="1.200" />
        </Svg>
      </button>
      {viewTools.map(([name, icon]) => (
        <button key={name} type="button" aria-label={name} className={`${tool} w-[23px]`}>{icon}</button>
      ))}
      <span className="ml-[3px] h-5 border-l border-[#cfcfcf]" />
      <button type="button" aria-label="Fit view" className={`${tool} ml-0.5 w-[23px]`}>
        <Svg size={14}>
          <rect x=".5" y=".5" width="13" height="13" fill="#fff" stroke="#777" />
          <path d="M2.500 5.500v-3h3M8.500 2.500h3v3M11.500 8.500v3h-3M5.500 11.500h-3v-3M2.500 2.500L6 6M11.500 2.500L8 6M11.500 11.500L8 8M2.500 11.500L6 8" stroke="#c0561c" strokeWidth="1.100" />
        </Svg>
      </button>
      <button type="button" aria-label="Cutting plane" className={`${tool} w-[23px]`}>
        <Svg>
          <path d="M2 4.500h9.500v9H2z" fill="#c96a38" stroke="#7a3410" />
          <path d="M11.500 4.500l2-1.500v9l-2 1.500z" fill="#8c3f14" />
          <path d="M9 6l6-5.500M1 15.500L4 13" stroke="#333" strokeWidth="1.400" />
        </Svg>
      </button>
      <button type="button" aria-label="View cube" className={`${tool} ml-[3px] w-7 gap-0.5`}>
        <Svg>
          <path d="M2 4l6-3 6 3v7.500L8 15l-6-3.500zM2 4l6 3 6-3M8 7v8" fill="#f8f8f8" stroke="#777" strokeWidth="1.200" />
        </Svg>
        <Caret className="text-[#777]" />
      </button>
      <span className="ml-[3px] h-5 border-l border-[#cfcfcf]" />
      <button type="button" aria-label="Result properties" className={`${tool} ml-[5px] w-[23px]`}>
        <Svg>
          <path d="M1.500 2.500h8v12h-8zM6 6.500h7.500v8H6" fill="#f4f4f4" stroke="#a2a2a2" />
          <path d="M3 9h3v3H3zM8 9l4 4M12 9l-4 4" stroke="#999" />
          <circle cx="11.500" cy="4.500" r="4" fill="#b5b5b5" />
          <path d="M9 4.500h5M11.500 2v5" stroke="#fff" strokeWidth="1.300" />
        </Svg>
      </button>
      <span className="ml-[9px]">mm</span>
      <span className="ml-[7px] h-[18px] border-l border-black" />
    </footer>
  );
}

export default function App() {
  return (
    <div className="flex h-screen min-h-[600px] flex-col overflow-hidden bg-[#f0f0f0]">
      <Gradients />
      <TitleBar />
      <div className="flex min-h-0 flex-1 flex-col border-l-2 border-[#17466b] pl-px">
        <Ribbon />
        <div className="flex min-h-0 flex-1 gap-1 bg-[#e4e4e4] pr-0.5 pt-0.5">
          <NavPanel />
          <div className="flex min-w-0 flex-1 flex-col">
            <DocTabs />
            <Viewport />
            <ViewTabs />
            <div className="mt-0.5 grid h-[237px] shrink-0 grid-cols-[530fr_315fr_386fr] grid-rows-[minmax(0,1fr)] gap-1">
              <TaskPanel />
              <ParamPanel />
              <MessagesPanel />
            </div>
          </div>
        </div>
        <StatusBar />
      </div>
      <div className="h-0.5 shrink-0 bg-[#0d2f4c]" />
    </div>
  );
}
